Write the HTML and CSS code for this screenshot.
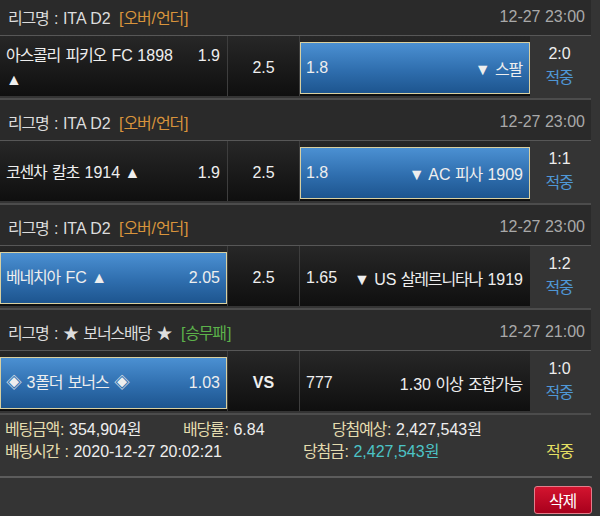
FILE: index.html
```html
<!DOCTYPE html>
<html lang="ko">
<head>
<meta charset="utf-8">
<link rel="stylesheet" href="styles.css">
</head>
<body>
<div class="wrap">
  <div class="block">
    <div class="hdr"><span class="lg"><span class="k">리그명</span> : ITA D2 <span class="ou">[<span class="k">오버</span>/<span class="k">언더</span>]</span></span><span class="dt">12-27 23:00</span></div>
    <div class="row">
      <div class="cell home"><div class="box"><div class="in"><span class="od">1.9</span><span class="k">아스콜리</span> <span class="k">피키오</span> <span>FC 1898</span> <span class="tri">▲</span></div></div></div>
      <div class="cell mid"><div class="box">2.5</div></div>
      <div class="cell away"><div class="box sel"><span>1.8</span><span>▼ <span class="k">스팔</span></span></div></div>
      <div class="res"><span class="sc">2:0</span><span class="hit k">적중</span></div>
    </div>
  </div>
  <div class="block">
    <div class="hdr"><span class="lg"><span class="k">리그명</span> : ITA D2 <span class="ou">[<span class="k">오버</span>/<span class="k">언더</span>]</span></span><span class="dt">12-27 23:00</span></div>
    <div class="row">
      <div class="cell home"><div class="box"><div class="in"><span class="od">1.9</span><span class="k">코센차</span> <span class="k">칼초</span> <span>1914</span> <span class="tri">▲</span></div></div></div>
      <div class="cell mid"><div class="box">2.5</div></div>
      <div class="cell away"><div class="box sel"><span>1.8</span><span>▼ AC <span class="k">피사</span> 1909</span></div></div>
      <div class="res"><span class="sc">1:1</span><span class="hit k">적중</span></div>
    </div>
  </div>
  <div class="block">
    <div class="hdr"><span class="lg"><span class="k">리그명</span> : ITA D2 <span class="ou">[<span class="k">오버</span>/<span class="k">언더</span>]</span></span><span class="dt">12-27 23:00</span></div>
    <div class="row">
      <div class="cell home"><div class="box sel"><div class="in"><span class="od">2.05</span><span class="k">베네치아</span> <span>FC</span> <span class="tri">▲</span></div></div></div>
      <div class="cell mid"><div class="box">2.5</div></div>
      <div class="cell away"><div class="box"><span>1.65</span><span>▼ US <span class="k">살레르니타나</span> 1919</span></div></div>
      <div class="res"><span class="sc">1:2</span><span class="hit k">적중</span></div>
    </div>
  </div>
  <div class="block">
    <div class="hdr"><span class="lg"><span class="k">리그명</span> : ★ <span class="k">보너스배당</span> ★ <span class="wdl">[<span class="k">승무패</span>]</span></span><span class="dt">12-27 21:00</span></div>
    <div class="row">
      <div class="cell home"><div class="box sel"><div class="in"><span class="od">1.03</span>◈ 3<span class="k">폴더</span> <span class="k">보너스</span> ◈</div></div></div>
      <div class="cell mid"><div class="box vs">VS</div></div>
      <div class="cell away"><div class="box"><span>777</span><span>1.30 <span class="k">이상</span> <span class="k">조합가능</span></span></div></div>
      <div class="res"><span class="sc">1:0</span><span class="hit k">적중</span></div>
    </div>
  </div>
  <div class="summary">
    <div class="sline">
      <span class="s1"><span class="lb k">베팅금액</span><span class="lb">:</span> 354,904<span class="k">원</span></span>
      <span class="s2"><span class="lb k">배당률</span><span class="lb">:</span> 6.84</span>
      <span><span class="lb k">당첨예상</span><span class="lb">:</span> 2,427,543<span class="k">원</span></span>
    </div>
    <div class="sline">
      <span class="t1"><span class="lb k">배팅시간</span><span class="lb"> :</span> 2020-12-27 20:02:21</span>
      <span class="t2"><span class="lb k">당첨금</span><span class="lb">:</span> <span class="win">2,427,543<span class="k">원</span></span></span>
      <span class="yl k">적중</span>
    </div>
  </div>
  <div class="actions"><button class="del"><span class="k">삭제</span></button></div>
</div>
</body>
</html>
```
FILE: styles.css
```css
html, body {
  margin: 0;
  padding: 0;
  background: #343434;
}
body {
  font-family: "Liberation Sans", "Noto Sans CJK KR", sans-serif;
  font-size: 16px;
  color: #eeeeee;
  width: 600px;
  height: 516px;
  overflow: hidden;
}
.k {
  letter-spacing: -1.2px;
  margin-right: 1px;
}
.wrap {
  width: 592px;
  margin-top: -5px;
}
.block {
  width: 591px;
  padding-bottom: 2px;
  border-bottom: 2px solid #4c4c4c;
}
.hdr {
  height: 37px;
  padding: 3px 6px 0 8px;
  background: #2a2a2a;
  border-bottom: 1px solid #575757;
  display: flex;
  align-items: center;
  justify-content: space-between;
  color: #dddddd;
}
.ou { color: #d8943c; margin-left: 4px; }
.wdl { color: #5cb24a; margin-left: 4px; }
.dt { color: #a9a9a9; }
.row {
  display: flex;
  height: 60px;
}
.cell {
  height: 60px;
  box-sizing: border-box;
  padding: 6px 0 2px;
  background: linear-gradient(#272727, #0f0f0f);
}
.home { width: 228px; border-right: 1px solid #3e3e3e; }
.mid { width: 72px; border-right: 1px solid #3e3e3e; }
.away { width: 230px; }
.box {
  height: 100%;
  box-sizing: border-box;
  border: 1px solid transparent;
  display: flex;
  align-items: center;
  justify-content: space-between;
  padding: 0 6px 0 5px;
}
.mid .box { justify-content: center; padding: 0; }
.vs { font-weight: bold; }
.sel {
  background: linear-gradient(#4b90d2, #2f6eae 55%, #1d558f);
  border-color: #d9d0a0;
}
.in {
  width: 100%;
  line-height: 24px;
}
.od {
  float: right;
  width: 42px;
  text-align: right;
}
.res {
  width: 59px;
  display: flex;
  flex-direction: column;
  align-items: center;
  justify-content: center;
  line-height: 24px;
  background: #343434;
}
.hit { color: #4f97d6; }
.summary {
  padding: 4px 0 13px 5px;
  border-bottom: 2px solid #5c5c5c;
  line-height: 22px;
}
.sline { display: flex; }
.s1 { width: 178px; }
.s2 { width: 149px; }
.t1 { width: 298px; }
.t2 { width: 243px; }
.lb { color: #e4dcae; }
.win { color: #4cc3c6; }
.yl { color: #e3df63; }
.actions {
  display: flex;
  justify-content: flex-end;
  padding: 8px 0 0;
}
.del {
  width: 58px;
  height: 28px;
  font-family: "Liberation Sans", "Noto Sans CJK KR", sans-serif;
  font-size: 16px;
  color: #ffffff;
  background: linear-gradient(#d3142f, #a8001c);
  border: 1px solid #e47c8a;
  border-radius: 3px;
  padding: 0;
}
```
